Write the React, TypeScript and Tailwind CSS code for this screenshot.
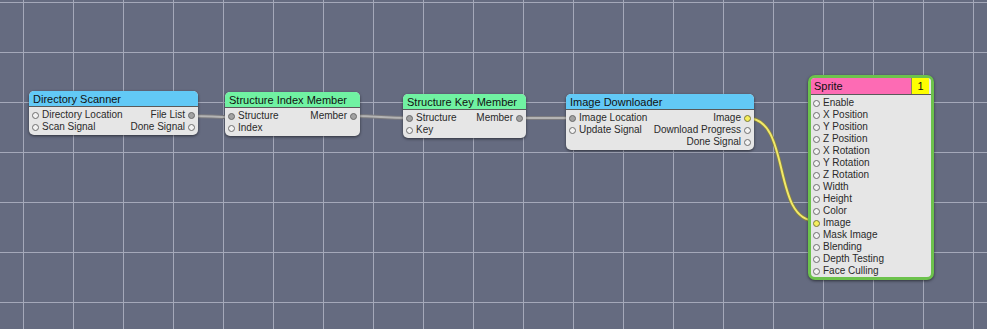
import React from "react";

type PortKind = "empty" | "gray" | "yellow";

function Port({ kind }: { kind: PortKind }) {
  const cls =
    kind === "gray"
      ? "bg-[#a2a2a2] border-[#6a6a6a]"
      : kind === "yellow"
      ? "bg-[#f6ef5c] border-[#7c7a3a]"
      : "bg-[#f2f2f2] border-[#6e6e6e]";
  return <span className={"inline-block w-[7px] h-[7px] rounded-full border shrink-0 " + cls} />;
}

type Side = { label: string; kind: PortKind } | null;

function Node({
  title,
  header,
  rows,
  className,
}: {
  title: string;
  header: string;
  rows: [Side, Side][];
  className: string;
}) {
  return (
    <div
      className={
        "absolute rounded-[5px] bg-[#e6e6e6] shadow-[0_1px_3px_rgba(0,0,0,0.55)] overflow-hidden " + className
      }
    >
      <div className={"h-[16px] px-[4px] border-b border-[#5a5a5a] text-[11px] leading-[16px] text-[#111] " + header}>
        {title}
      </div>
      <div className="pt-[2px] pb-[2px] px-[3px]">
        {rows.map(([l, r], i) => (
          <div key={i} className="flex justify-between items-center h-[12px] text-[10px] leading-[12px] text-[#2a2a2a]">
            <div className="flex items-center gap-[3px]">
              {l && (
                <>
                  <Port kind={l.kind} />
                  <span>{l.label}</span>
                </>
              )}
            </div>
            <div className="flex items-center gap-[3px]">
              {r && (
                <>
                  <span>{r.label}</span>
                  <Port kind={r.kind} />
                </>
              )}
            </div>
          </div>
        ))}
      </div>
    </div>
  );
}

const spriteInputs: { label: string; kind: PortKind }[] = [
  { label: "Enable", kind: "empty" },
  { label: "X Position", kind: "empty" },
  { label: "Y Position", kind: "empty" },
  { label: "Z Position", kind: "empty" },
  { label: "X Rotation", kind: "empty" },
  { label: "Y Rotation", kind: "empty" },
  { label: "Z Rotation", kind: "empty" },
  { label: "Width", kind: "empty" },
  { label: "Height", kind: "empty" },
  { label: "Color", kind: "empty" },
  { label: "Image", kind: "yellow" },
  { label: "Mask Image", kind: "empty" },
  { label: "Blending", kind: "empty" },
  { label: "Depth Testing", kind: "empty" },
  { label: "Face Culling", kind: "empty" },
];

function wire(x1: number, y1: number, x2: number, y2: number, d: number) {
  return `M ${x1} ${y1} C ${x1 + d} ${y1}, ${x2 - d} ${y2}, ${x2} ${y2}`;
}

export default function App() {
  const vLines = Array.from({ length: 20 }, (_, i) => 23 + i * 50);
  const hLines = Array.from({ length: 7 }, (_, i) => 2 + i * 50);
  return (
    <div
      className="relative w-[987px] h-[329px] overflow-hidden bg-[#656b80]"
      style={{ fontFamily: '"Liberation Sans", Arial, sans-serif' }}
    >
      <svg className="absolute inset-0" width={987} height={329}>
        {vLines.map((x) => (
          <line key={"v" + x} x1={x + 0.5} y1={0} x2={x + 0.5} y2={329} stroke="#a4a8b9" strokeWidth={1} />
        ))}
        {hLines.map((y) => (
          <line key={"h" + y} x1={0} y1={y + 0.5} x2={987} y2={y + 0.5} stroke="#a4a8b9" strokeWidth={1} />
        ))}
        {[
          wire(192, 116, 232, 117, 20),
          wire(353, 116, 409, 118, 25),
          wire(519, 118, 572, 118, 25),
        ].map((d, i) => (
          <g key={i}>
            <path d={d} fill="none" stroke="#7c7c80" strokeWidth={4} />
            <path d={d} fill="none" stroke="#b4b4b4" strokeWidth={2} />
          </g>
        ))}
        <path d={wire(747, 118, 816, 221, 45)} fill="none" stroke="#8a8440" strokeWidth={3.5} />
        <path d={wire(747, 118, 816, 221, 45)} fill="none" stroke="#f2ea6a" strokeWidth={2} />
      </svg>

      <Node
        title="Directory Scanner"
        header="bg-[#62c9f6]"
        className="left-[29px] top-[91px] w-[169px]"
        rows={[
          [
            { label: "Directory Location", kind: "empty" },
            { label: "File List", kind: "gray" },
          ],
          [
            { label: "Scan Signal", kind: "empty" },
            { label: "Done Signal", kind: "empty" },
          ],
        ]}
      />
      <Node
        title="Structure Index Member"
        header="bg-[#70f2a2]"
        className="left-[225px] top-[92px] w-[135px]"
        rows={[
          [
            { label: "Structure", kind: "gray" },
            { label: "Member", kind: "gray" },
          ],
          [{ label: "Index", kind: "empty" }, null],
        ]}
      />
      <Node
        title="Structure Key Member"
        header="bg-[#70f2a2]"
        className="left-[403px] top-[94px] w-[123px]"
        rows={[
          [
            { label: "Structure", kind: "gray" },
            { label: "Member", kind: "gray" },
          ],
          [{ label: "Key", kind: "empty" }, null],
        ]}
      />
      <Node
        title="Image Downloader"
        header="bg-[#62c9f6]"
        className="left-[566px] top-[94px] w-[188px]"
        rows={[
          [
            { label: "Image Location", kind: "gray" },
            { label: "Image", kind: "yellow" },
          ],
          [
            { label: "Update Signal", kind: "empty" },
            { label: "Download Progress", kind: "empty" },
          ],
          [null, { label: "Done Signal", kind: "empty" }],
        ]}
      />

      <div className="absolute left-[808px] top-[75px] w-[126px] h-[205px] rounded-[7px] border-[3px] border-[#6cc24c] bg-[#e6e6e6] shadow-[0_1px_3px_rgba(0,0,0,0.55)] overflow-hidden">
        <div className="flex h-[17px] border-b border-[#5a5a5a] text-[11px] leading-[16px] text-[#111]">
          <div className="flex-1 bg-[#fd6bb4] px-[3px]">Sprite</div>
          <div className="w-[18px] bg-[#ffff00] border-l border-[#8a8a5a] text-center">1</div>
          <div className="w-[2px] bg-[#e6e6e6]" />
        </div>
        <div className="pt-[2px] px-[2px]">
          {spriteInputs.map((p) => (
            <div key={p.label} className="flex items-center gap-[3px] h-[12px] text-[10px] leading-[12px] text-[#2a2a2a]">
              <Port kind={p.kind} />
              <span>{p.label}</span>
            </div>
          ))}
        </div>
      </div>
    </div>
  );
}
